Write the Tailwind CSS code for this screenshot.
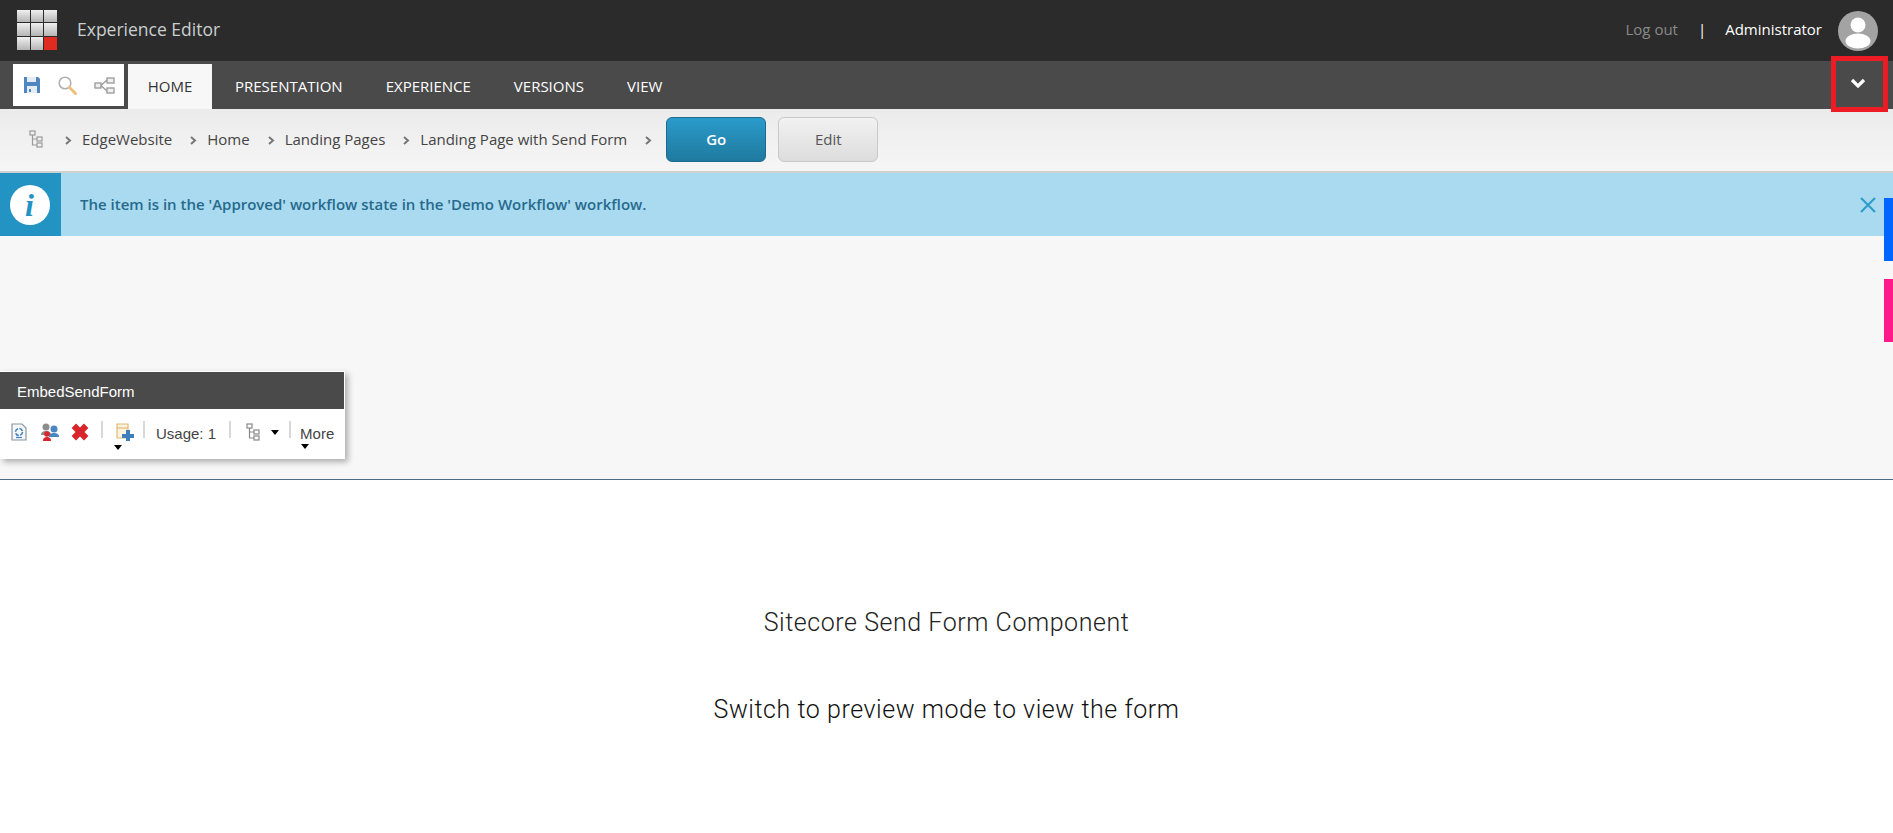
<!DOCTYPE html>
<html lang="en">
<head>
    <meta charset="UTF-8">
    <title>Experience Editor</title>
    <script src="https://cdn.jsdelivr.net/npm/@tailwindcss/browser@4"></script>
</head>
<body class="bg-white overflow-hidden font-['Open_Sans',sans-serif]">
    <div class="relative w-[1893px] h-[833px] overflow-hidden">
        <!-- Top bar -->
        <div class="h-[61px] bg-[#2b2b2b] flex items-center pl-[17px] pr-[15px]">
            <div class="grid grid-cols-3 gap-px w-[40px] h-[40px] -mt-[2px]">
                <div class="bg-gradient-to-b from-[#f0f0f0] to-[#b5b5b5]"></div>
                <div class="bg-gradient-to-b from-[#f0f0f0] to-[#b5b5b5]"></div>
                <div class="bg-gradient-to-b from-[#f0f0f0] to-[#b5b5b5]"></div>
                <div class="bg-gradient-to-b from-[#f0f0f0] to-[#b5b5b5]"></div>
                <div class="bg-gradient-to-b from-[#f0f0f0] to-[#b5b5b5]"></div>
                <div class="bg-gradient-to-b from-[#f0f0f0] to-[#b5b5b5]"></div>
                <div class="bg-gradient-to-b from-[#f0f0f0] to-[#b5b5b5]"></div>
                <div class="bg-gradient-to-b from-[#f0f0f0] to-[#b5b5b5]"></div>
                <div class="bg-[#e02b20]"></div>
            </div>
            <span class="ml-[20px] -mt-[2px] text-[17.5px] text-[#c8cfcf]">Experience Editor</span>
            <span class="ml-auto -mt-[2px] text-[15px] text-[#8a8a8a]">Log out</span>
            <span class="ml-[20px] -mt-[2px] text-[15px] text-white">|</span>
            <span class="ml-[19px] -mt-[2px] text-[15px] text-white">Administrator</span>
            <div class="ml-[16px] w-[40px] h-[40px] rounded-full bg-[#a3a3a3] overflow-hidden">
                <svg viewBox="0 0 40 40" class="w-[40px] h-[40px]">
                    <circle cx="20" cy="14" r="7.5" fill="#fff"/>
                    <ellipse cx="20" cy="30" rx="12.5" ry="7.5" fill="#fff"/>
                </svg>
            </div>
        </div>

        <!-- Ribbon tabs -->
        <div class="h-[48px] bg-[#4a4a4a] flex items-start pl-[13px] pt-[3px] pr-[11px]">
            <div class="w-[111px] h-[42px] bg-white flex items-center pl-[11px] gap-[17px]">
                <svg viewBox="0 0 16 16" class="w-[16px] h-[16px]">
                    <path d="M0 0h14l2 2v14H0z" fill="#4f86c0"/>
                    <path d="M3 0h9v5H3z" fill="#e4ecf5"/>
                    <path d="M3 9h10v7H3z" fill="#e4ecf5"/>
                    <path d="M5 12h2v3H5z" fill="#4f86c0"/>
                </svg>
                <svg viewBox="0 0 20 20" class="w-[20px] h-[20px]">
                    <circle cx="8" cy="8" r="5.8" fill="#fff" stroke="#b0b0b0" stroke-width="1.6"/>
                    <path d="M12.5 12.5l6 6" stroke="#edc07a" stroke-width="3" stroke-linecap="round"/>
                </svg>
                <svg viewBox="0 0 21 17" class="w-[21px] h-[17px]" fill="#f0f0f0" stroke="#999" stroke-width="1.3">
                    <path d="M7 8.500L13 3M7 8.500L13 14" fill="none"/>
                    <rect x="1" y="6" width="6" height="5"/>
                    <rect x="13" y="1" width="7" height="5"/>
                    <rect x="13" y="11" width="7" height="5"/>
                </svg>
            </div>
            <div class="ml-[4px] w-[84px] h-[45px] bg-[#f7f7f7] flex items-center justify-center text-[15px] text-[#333]">HOME</div>
            <div class="h-[45px] flex items-center text-[15px] text-white ml-[23px] gap-[43px]">
                <span>PRESENTATION</span>
                <span>EXPERIENCE</span>
                <span>VERSIONS</span>
                <span>VIEW</span>
            </div>
            <div class="ml-auto w-[48px] h-[38px] flex items-center justify-center">
                <svg viewBox="0 0 16 11" class="w-[16px] h-[11px]">
                    <path d="M2 2l6 6 6-6" fill="none" stroke="#fff" stroke-width="3.2"/>
                </svg>
            </div>
        </div>

        <!-- Breadcrumb -->
        <div class="h-[64px] pb-[2px] bg-gradient-to-b from-[#ebebeb] to-[#f6f6f6] border-b-2 border-[#cfd1d1] flex items-center text-[15px] text-[#444]">
            <svg viewBox="0 0 14 18" fill="none" stroke="#999" stroke-width="1.2" class="ml-[29px] w-[14px] h-[18px]">
                <rect x="1" y="1" width="5" height="4"/>
                <rect x="8" y="7" width="5" height="4"/>
                <rect x="8" y="13" width="5" height="4"/>
                <path d="M3.500 5v10H8M3.500 9H8"/>
            </svg>
            <svg viewBox="0 0 7 9" fill="none" stroke="#777" stroke-width="2" class="ml-[22px] mt-[2px] w-[7px] h-[9px]"><path d="M1 1l4 3.500L1 8"/></svg>
            <span class="ml-[10px]">EdgeWebsite</span>
            <svg viewBox="0 0 7 9" fill="none" stroke="#777" stroke-width="2" class="ml-[18px] mt-[2px] w-[7px] h-[9px]"><path d="M1 1l4 3.500L1 8"/></svg>
            <span class="ml-[10px]">Home</span>
            <svg viewBox="0 0 7 9" fill="none" stroke="#777" stroke-width="2" class="ml-[18px] mt-[2px] w-[7px] h-[9px]"><path d="M1 1l4 3.500L1 8"/></svg>
            <span class="ml-[10px]">Landing Pages</span>
            <svg viewBox="0 0 7 9" fill="none" stroke="#777" stroke-width="2" class="ml-[18px] mt-[2px] w-[7px] h-[9px]"><path d="M1 1l4 3.500L1 8"/></svg>
            <span class="ml-[10px]">Landing Page with Send Form</span>
            <svg viewBox="0 0 7 9" fill="none" stroke="#777" stroke-width="2" class="ml-[18px] mt-[2px] w-[7px] h-[9px]"><path d="M1 1l4 3.500L1 8"/></svg>
            <button class="ml-[14px] w-[100px] h-[45px] rounded-[6px] border border-[#1e6a8c] bg-gradient-to-b from-[#2a9bcb] to-[#1f7a9f] text-white font-semibold text-[15px]">Go</button>
            <button class="ml-[12px] w-[100px] h-[45px] rounded-[6px] border border-[#c9c9c9] bg-gradient-to-b from-[#f2f2f2] to-[#dcdcdc] text-[#555] text-[15px]">Edit</button>
        </div>

        <!-- Notification -->
        <div class="h-[63px] bg-[#a9daf0] flex items-center">
            <div class="w-[61px] h-[63px] pr-[2px] bg-[#2293c3] flex items-center justify-center">
                <div class="w-[40px] h-[40px] rounded-full bg-white flex items-center justify-center font-['Liberation_Serif',serif] italic font-bold text-[32px] text-[#2293c3] leading-none">i</div>
            </div>
            <span class="ml-[19px] text-[15px] font-semibold text-[#266a8c]">The item is in the 'Approved' workflow state in the 'Demo Workflow' workflow.</span>
            <svg viewBox="0 0 16 16" fill="none" stroke="#2d9bc9" stroke-width="2" class="ml-auto mr-[17px] w-[16px] h-[16px]"><path d="M1 1l14 14M15 1L1 15"/></svg>
        </div>

        <!-- Chrome spacer -->
        <div class="h-[244px] bg-[#f7f7f7] border-b border-[#4d6a85]"></div>

        <!-- Page content -->
        <div class="flex flex-col items-center font-['Roboto',sans-serif] font-light text-[25px] tracking-[0.55px]">
            <p class="mt-[127px] leading-[32px] text-[#222]">Sitecore Send Form Component</p>
            <p class="mt-[55px] leading-[32px] text-[#111]">Switch to preview mode to view the form</p>
        </div>

        <!-- Floating rendering toolbar -->
        <div class="absolute left-0 top-[371px] w-[345px] h-[88px] bg-white border border-l-0 border-white shadow-[3px_3px_6px_rgba(0,0,0,0.3)] font-['Liberation_Sans',sans-serif]">
            <div class="h-[37px] bg-[#4a4a4a] text-white text-[15px] flex items-center pl-[17px] pt-[3px]">EmbedSendForm</div>
            <div class="relative flex items-start pt-[14px] text-[15px] text-[#444]">
                <svg viewBox="0 0 16 18" class="ml-[11px] w-[16px] h-[18px]" fill="none" stroke="#8a96a3" stroke-width="1.2">
                    <path d="M1 1h10l4 4v12H1z" fill="#f4f6f8"/>
                    <circle cx="8" cy="9" r="3.500" stroke="#3f7fbf" stroke-width="1.6" stroke-dasharray="4 1.500"/>
                    <path d="M5 14.500h6" stroke="#3f7fbf"/>
                </svg>
                <svg viewBox="0 0 20 18" class="ml-[13px] w-[20px] h-[18px]">
                    <circle cx="6" cy="4" r="3.500" fill="#8d8d8d"/>
                    <path d="M1 12c0-3 2-4 5-4s5 1 5 4z" fill="#8d8d8d"/>
                    <circle cx="14" cy="6" r="3.500" fill="#4a86c0"/>
                    <path d="M9 14c0-3 2-4 5-4s5 1 5 4z" fill="#4a86c0"/>
                    <circle cx="7" cy="11" r="2.800" fill="#d8262c"/>
                    <path d="M3 18c0-3 1.500-4 4-4s4 1 4 4z" fill="#d8262c"/>
                </svg>
                <svg viewBox="0 0 16 16" class="ml-[11px] w-[18px] h-[18px]">
                    <path d="M0.500 4.500L4.500 0.500 8 4 11.500 0.500 15.500 4.500 12 8 15.500 11.500 11.500 15.500 8 12 4.500 15.500 0.500 11.500 4 8z" fill="#d8262c"/>
                </svg>
                <div class="ml-[12px] w-[2px] h-[17px] -mt-[2px] bg-[#d8d8d8]"></div>
                <svg viewBox="0 0 18 18" class="ml-[13px] w-[18px] h-[18px]">
                    <path d="M1 1h11v14H1z" fill="#fdf3df" stroke="#e3b878" stroke-width="1.2"/>
                    <path d="M1 5h11" stroke="#e3b878" stroke-width="1.2"/>
                    <path d="M10 7h4v4h4v4h-4v3h-4v-3H6v-4h4z" fill="#3f7fbf"/>
                </svg>
                <div class="ml-[9px] w-[2px] h-[17px] -mt-[2px] bg-[#d8d8d8]"></div>
                <span class="ml-[11px] mt-[1px] leading-[20px]">Usage: 1</span>
                <div class="ml-[13px] w-[2px] h-[17px] -mt-[2px] bg-[#d8d8d8]"></div>
                <svg viewBox="0 0 14 18" fill="none" stroke="#888" stroke-width="1.2" class="ml-[15px] w-[14px] h-[18px]">
                    <rect x="1" y="1" width="5" height="4"/>
                    <rect x="8" y="7" width="5" height="4"/>
                    <rect x="8" y="13" width="5" height="4"/>
                    <path d="M3.500 5v10H8M3.500 9H8"/>
                </svg>
                <div class="ml-[11px] mt-[7px] w-0 h-0 border-x-[4px] border-x-transparent border-t-[5px] border-t-black"></div>
                <div class="ml-[10px] w-[2px] h-[17px] -mt-[2px] bg-[#d8d8d8]"></div>
                <span class="ml-[9px] mt-[1px] leading-[20px]">More</span>
                <div class="absolute left-[114px] top-[36px] w-0 h-0 border-x-[4px] border-x-transparent border-t-[5px] border-t-black"></div>
                <div class="absolute left-[301px] top-[35px] w-0 h-0 border-x-[4px] border-x-transparent border-t-[5px] border-t-black"></div>
            </div>
        </div>

        <!-- Side tabs -->
        <div class="absolute right-0 top-[198px] w-[9px] h-[63px] bg-[#0066ff]"></div>
        <div class="absolute right-0 top-[279px] w-[9px] h-[63px] bg-[#ff1a8c]"></div>

        <!-- Red annotation box -->
        <div class="absolute left-[1831px] top-[56px] w-[57px] h-[56px] border-[5px] border-[#ed1c24]"></div>
    </div>
</body>
</html>
